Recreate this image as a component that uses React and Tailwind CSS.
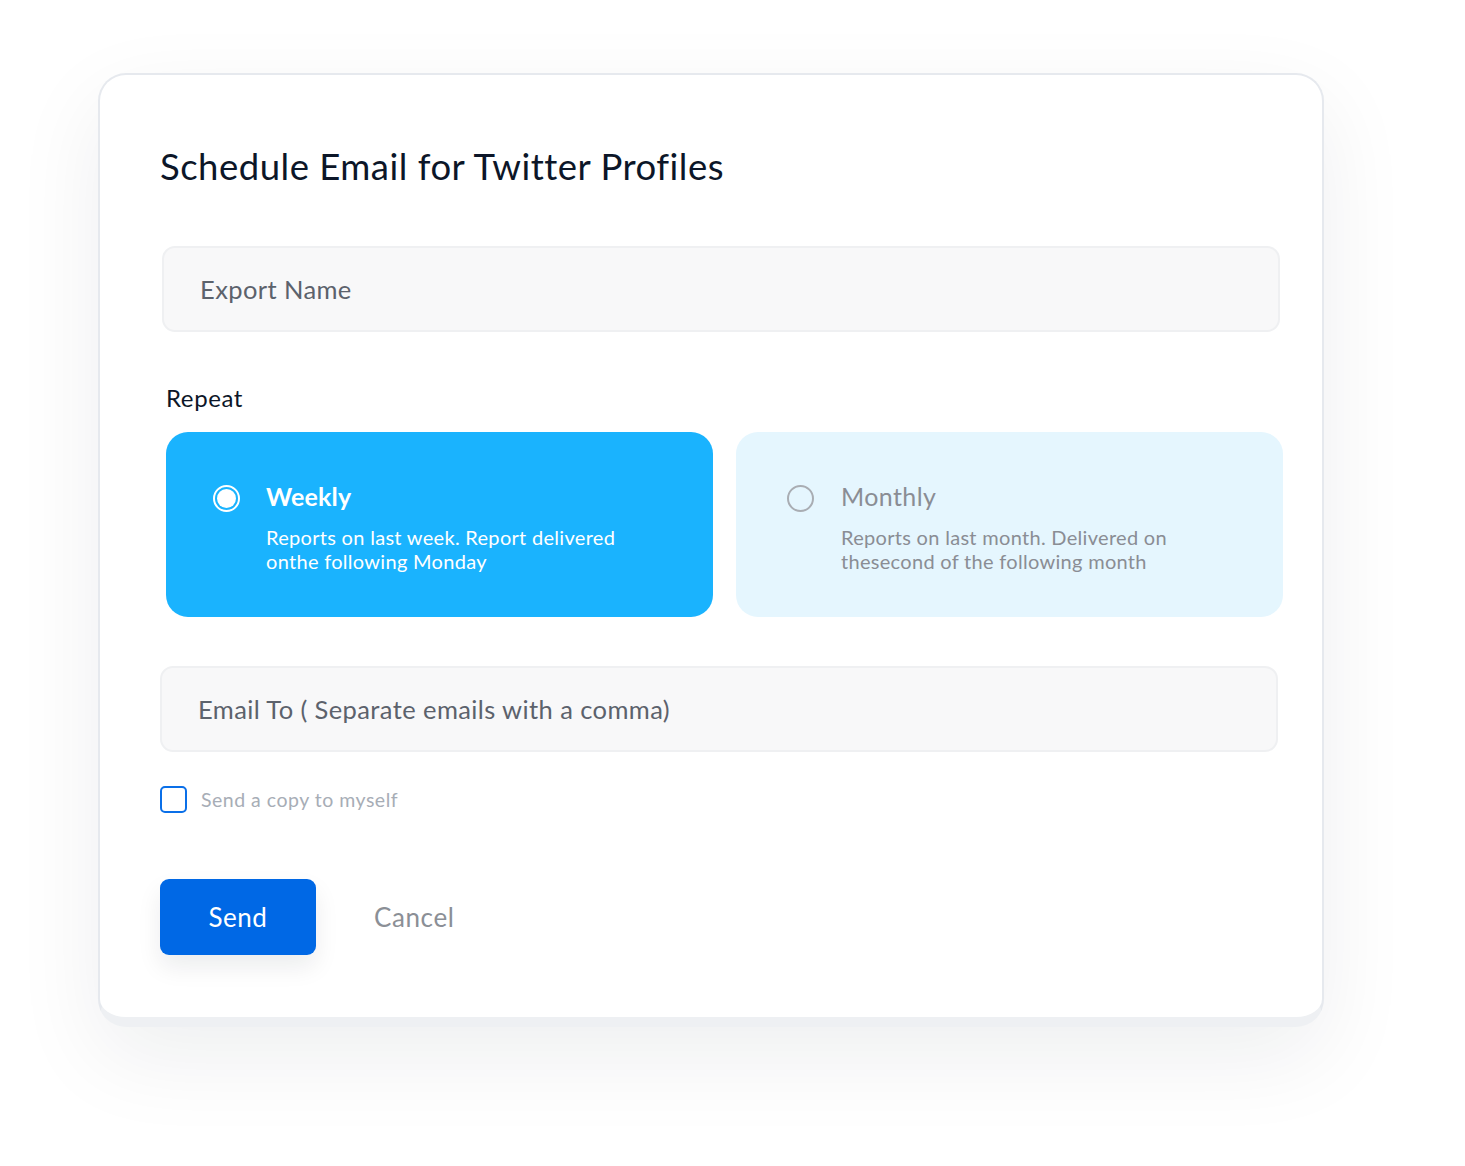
import { useState } from 'react'

function RadioDot({ checked }) {
  if (checked) {
    return (
      <span className="flex h-[27px] w-[27px] shrink-0 items-center justify-center rounded-full border-2 border-white">
        <span className="block h-[19px] w-[19px] rounded-full bg-white" />
      </span>
    )
  }
  return <span className="block h-[27px] w-[27px] shrink-0 rounded-full border-2 border-[#a9adb3]" />
}

function RepeatOption({ active, title, lines, onClick }) {
  return (
    <button
      type="button"
      onClick={onClick}
      className={`flex h-[185px] w-[547px] items-start rounded-[22px] pt-[49px] text-left ${
        active ? 'gap-[26px] bg-[#1ab3fe] pl-[47px] text-white' : 'gap-[27px] bg-[#e5f6fe] pl-[51px] text-[#8a8d94]'
      }`}
    >
      <span className="mt-[4px] block">
        <RadioDot checked={active} />
      </span>
      <span className="flex flex-col">
        <span className={`text-[25px] leading-[30px] ${active ? 'font-bold tracking-[0.2px]' : 'font-normal tracking-[0.4px]'}`}>
          {title}
        </span>
        <span className="mt-[14px] text-[20px] leading-[24px] tracking-[0.3px]">
          {lines[0]}
          <br />
          {lines[1]}
        </span>
      </span>
    </button>
  )
}

export default function App() {
  const [repeat, setRepeat] = useState('weekly')
  const [copy, setCopy] = useState(false)

  return (
    <div className="min-h-[1166px] w-full bg-white pb-[140px] pt-[73px] font-['Lato',sans-serif]">
      <div className="ml-[98px] w-[1226px] rounded-[28px] border-2 border-b-[10px] border-[#e6e9ee] border-b-[#eef0f3] bg-white shadow-[0_30px_90px_rgba(15,23,42,0.07)]">
        <div className="pb-[62px] pl-[60px] pt-[71px]">
          <h1 className="text-[36.5px] leading-[40px] font-normal tracking-[0.5px] text-[#0c1628]">
            Schedule Email for Twitter Profiles
          </h1>

          <div className="ml-[2px] mt-[60px] flex h-[86px] w-[1118px] items-center rounded-[13px] border-2 border-[#eff0f2] bg-[#f8f8f9] pl-[36px]">
            <span className="text-[25.5px] tracking-[0.4px] text-[#5c626c]">Export Name</span>
          </div>

          <p className="ml-[6px] mt-[52px] text-[24px] leading-[28px] tracking-[0.6px] text-[#0c1628]">Repeat</p>

          <div className="ml-[6px] mt-[20px] flex gap-[23px]">
            <RepeatOption
              active={repeat === 'weekly'}
              title="Weekly"
              lines={['Reports on last week. Report delivered', 'onthe following Monday']}
              onClick={() => setRepeat('weekly')}
            />
            <RepeatOption
              active={repeat === 'monthly'}
              title="Monthly"
              lines={['Reports on last month. Delivered on', 'thesecond of the following month']}
              onClick={() => setRepeat('monthly')}
            />
          </div>

          <div className="mt-[49px] flex h-[86px] w-[1118px] items-center rounded-[13px] border-2 border-[#eff0f2] bg-[#f8f8f9] pl-[36px]">
            <span className="text-[25.5px] tracking-[0.4px] text-[#5c626c]">Email To ( Separate emails with a comma)</span>
          </div>

          <label className="mt-[33px] flex cursor-pointer items-center gap-[14px]">
            <span
              onClick={() => setCopy(!copy)}
              className={`block h-[27px] w-[27px] rounded-[5px] border-2 border-[#0a6fe8] ${copy ? 'bg-[#0a6fe8]' : 'bg-white'}`}
            />
            <span className="text-[19.5px] tracking-[0.5px] text-[#a7adb6]">Send a copy to myself</span>
          </label>

          <div className="mt-[65px] flex items-center gap-[58px]">
            <button
              type="button"
              className="h-[76px] w-[156px] rounded-[9px] bg-[#0068e5] text-[26px] tracking-[0.5px] text-white shadow-[0_12px_24px_rgba(15,23,42,0.08)]"
            >
              Send
            </button>
            <button type="button" className="text-[26px] tracking-[0.6px] text-[#8b8f96]">
              Cancel
            </button>
          </div>
        </div>
      </div>
    </div>
  )
}
